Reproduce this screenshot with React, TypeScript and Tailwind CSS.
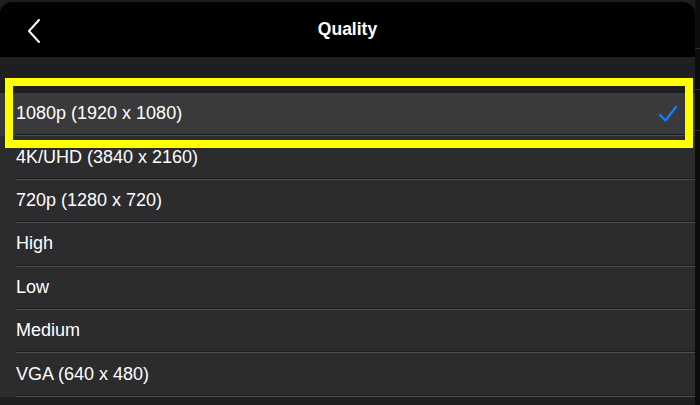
import React from "react";

const options = [
  "1080p (1920 x 1080)",
  "4K/UHD (3840 x 2160)",
  "720p (1280 x 720)",
  "High",
  "Low",
  "Medium",
  "VGA (640 x 480)",
];

const Row = ({ label, selected }: { label: string; selected: boolean }) => {
  return (
    <div className={selected ? "bg-[#3a3a3c]" : "bg-[#2c2c2e]"}>
      <div className="flex h-[41.4px] items-center justify-between pl-4 pr-[17px]">
        <span className="text-[18px] text-white">{label}</span>
        {selected && (
          <svg width="20" height="18" viewBox="0 0 20 18" fill="none">
            <path
              d="M2 10 L7.5 15.5 L18 2"
              stroke="#1a7cf0"
              strokeWidth="2.4"
              strokeLinecap="round"
              strokeLinejoin="round"
            />
          </svg>
        )}
      </div>
      <div className="ml-4 h-px bg-[#1c1c1e]" />
      <div className="ml-4 h-px bg-[#4e4e50]" />
    </div>
  );
};

export default function App() {
  return (
    <div
      className="flex h-[405px] w-[700px] overflow-hidden bg-[#0c0e0b]"
      style={{ fontFamily: '"Liberation Sans", Arial, sans-serif' }}
    >
      <div className="relative flex w-[695px] flex-col bg-[#1c1e1c] pt-[2px]">
        <div className="relative flex h-[55px] items-center justify-center rounded-t-[12px] bg-black">
          <svg
            className="absolute left-[26px] top-[16px]"
            width="16"
            height="26"
            viewBox="0 0 16 26"
            fill="none"
          >
            <path
              d="M13 2 L3 13 L13 24"
              stroke="white"
              strokeWidth="2"
              strokeLinecap="round"
              strokeLinejoin="round"
            />
          </svg>
          <h1 className="text-[17.5px] font-bold text-white">Quality</h1>
        </div>
        <div className="flex flex-1 flex-col bg-[#1f1f21] pt-[36px]">
          {options.map((o, i) => (
            <Row key={o} label={o} selected={i === 0} />
          ))}
        </div>
        <div className="pointer-events-none absolute left-[5px] top-[78px] h-[70px] w-[688px] border-[8px] border-[#ffff00]" />
      </div>
      <div className="flex flex-1 flex-col gap-[40px] pt-[48px]">
        <div className="h-px bg-[#2a2e28]" />
        <div className="h-px bg-[#2a2e28]" />
        <div className="h-px bg-[#2a2e28]" />
      </div>
    </div>
  );
}
